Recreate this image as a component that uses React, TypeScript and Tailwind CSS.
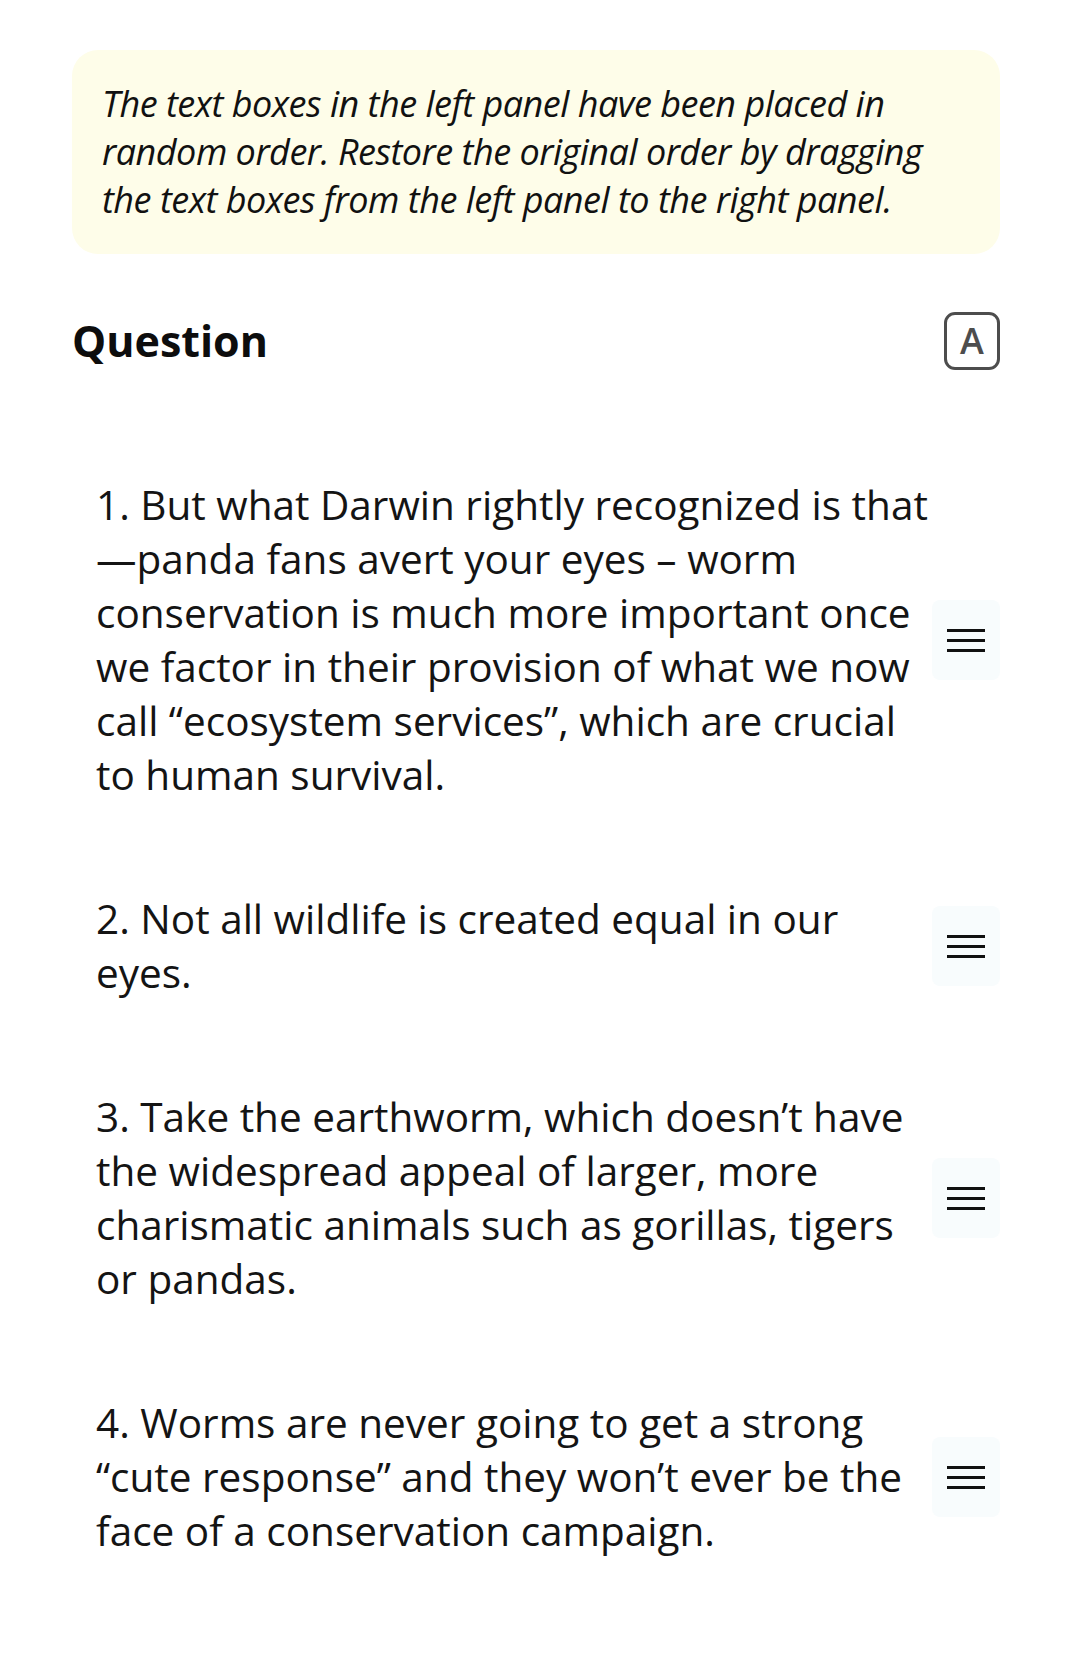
const FONT = { fontFamily: '"Open Sans", "Noto Sans", sans-serif' };

const ITEMS = [
  '1. But what Darwin rightly recognized is that —panda fans avert your eyes – worm conservation is much more important once we factor in their provision of what we now call “ecosystem services”, which are crucial to human survival.',
  '2. Not all wildlife is created equal in our eyes.',
  '3. Take the earthworm, which doesn’t have the widespread appeal of larger, more charismatic animals such as gorillas, tigers or pandas.',
  '4. Worms are never going to get a strong “cute response” and they won’t ever be the face of a conservation campaign.',
];

function Handle() {
  return (
    <div className="w-[68px] h-[80px] rounded-lg bg-[#f8fcfd] flex items-center justify-center shrink-0">
      <div className="flex flex-col gap-[7px]">
        <div className="w-[38px] h-[3px] bg-[#111]" />
        <div className="w-[38px] h-[3px] bg-[#111]" />
        <div className="w-[38px] h-[3px] bg-[#111]" />
      </div>
    </div>
  );
}

export default function App() {
  return (
    <div className="min-h-[1670px] w-[1065px] bg-white text-[#141414]" style={FONT}>
      <div className="pl-[72px] pr-[65px] pt-[50px]">
        <div className="rounded-[26px] bg-[#fefde9] px-[30px] py-[30px]">
          <p className="italic text-[36px] leading-[48px] tracking-[-0.5px] text-[#111]">
            The text boxes in the left panel have been placed in random order. Restore the original order by dragging the text boxes from the left panel to the right panel.
          </p>
        </div>

        <div className="mt-[58px] flex items-center justify-between">
          <h2 className="text-[43px] leading-[56px] font-bold text-[#0d0d0d]">Question</h2>
          <div className="w-[56px] h-[58px] rounded-[11px] border-[3px] border-[#4d4d4d] flex items-center justify-center text-[#4d4d4d] text-[36px] font-semibold leading-none">
            A
          </div>
        </div>

        <div className="mt-[63px] flex flex-col">
          {ITEMS.map((t) => (
            <div key={t} className="flex items-center pl-[24px] py-[45px]">
              <p className="flex-1 text-[40.5px] leading-[54px]">{t}</p>
              <Handle />
            </div>
          ))}
        </div>
      </div>
    </div>
  );
}
